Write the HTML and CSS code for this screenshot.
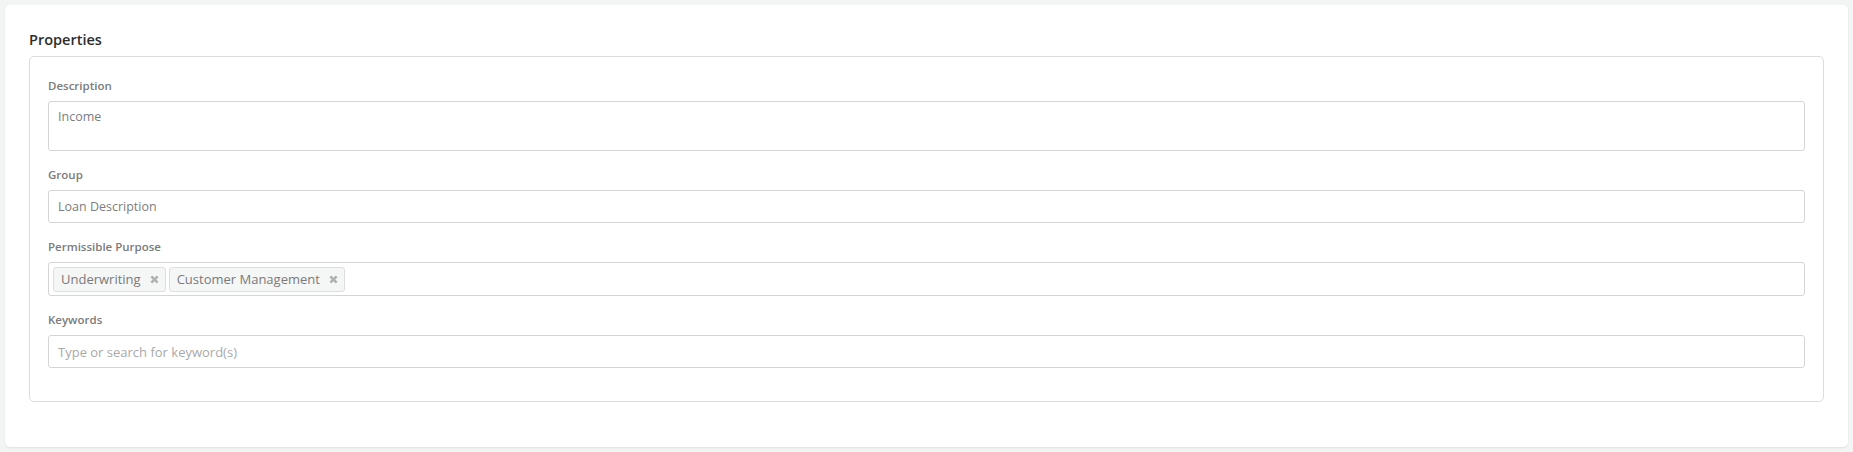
FILE: index.html
```html
<!DOCTYPE html>
<html lang="en">
<head>
<meta charset="utf-8">
<title>Properties</title>
<link rel="stylesheet" href="styles.css">
</head>
<body>
<div class="card">
  <h2 class="card-title">Properties</h2>
  <div class="fieldset">
    <div class="field">
      <label class="field-label">Description</label>
      <div class="input textarea">Income</div>
    </div>
    <div class="field">
      <label class="field-label">Group</label>
      <div class="input">Loan Description</div>
    </div>
    <div class="field">
      <label class="field-label">Permissible Purpose</label>
      <div class="input tags">
        <span class="tag">Underwriting<svg class="tag-x" viewBox="0 0 10 10" width="9" height="9"><path d="M1.5 1.5L8.5 8.5M8.5 1.5L1.5 8.5" stroke="#b0b0b0" stroke-width="2.8" stroke-linecap="butt"/></svg></span>
        <span class="tag">Customer Management<svg class="tag-x" viewBox="0 0 10 10" width="9" height="9"><path d="M1.5 1.5L8.5 8.5M8.5 1.5L1.5 8.5" stroke="#b0b0b0" stroke-width="2.8" stroke-linecap="butt"/></svg></span>
      </div>
    </div>
    <div class="field">
      <label class="field-label">Keywords</label>
      <div class="input placeholder">Type or search for keyword(s)</div>
    </div>
  </div>
</div>
</body>
</html>
```
FILE: styles.css
```css
html, body {
  margin: 0;
  padding: 0;
}
body {
  background: #f3f4f4;
  font-family: "Open Sans", "Segoe UI", sans-serif;
  padding: 5px;
  box-sizing: border-box;
  height: 452px;
}
.card {
  background: #ffffff;
  border-radius: 5px;
  box-shadow: 0 1px 2px rgba(0, 0, 0, 0.08);
  padding: 24px 24px 45px 24px;
  height: 442px;
  box-sizing: border-box;
}
.card-title {
  margin: 0 0 5px 0;
  font-size: 14.5px;
  line-height: 22px;
  font-weight: 600;
  color: #2d2d2d;
}
.fieldset {
  border: 1px solid #dcdcdc;
  border-radius: 5px;
  padding: 20px 18px 33px 18px;
  display: flex;
  flex-direction: column;
  gap: 15px;
}
.field {
  display: flex;
  flex-direction: column;
}
.field-label {
  font-size: 11.5px;
  line-height: 17px;
  font-weight: 600;
  color: #7b7b7b;
  margin-bottom: 7px;
}
.input {
  border: 1px solid #d5d5d5;
  border-radius: 3px;
  height: 33px;
  box-sizing: border-box;
  padding: 0 9px;
  display: flex;
  align-items: center;
  font-size: 12.5px;
  color: #7d7d7d;
}
.textarea {
  height: 50px;
  align-items: flex-start;
  padding-top: 6px;
}
.placeholder {
  color: #a9a9a9;
  font-size: 13px;
}
.tags {
  height: 34px;
  padding: 0 4px;
  gap: 3px;
}
.tag {
  display: inline-flex;
  align-items: center;
  height: 25px;
  box-sizing: border-box;
  border: 1px solid #dedede;
  border-radius: 3px;
  background: #f5f6f6;
  padding: 0 6px 0 7px;
  gap: 9px;
  font-size: 13px;
  color: #7a7a7a;
}
.tag-x {
  display: block;
}
```
